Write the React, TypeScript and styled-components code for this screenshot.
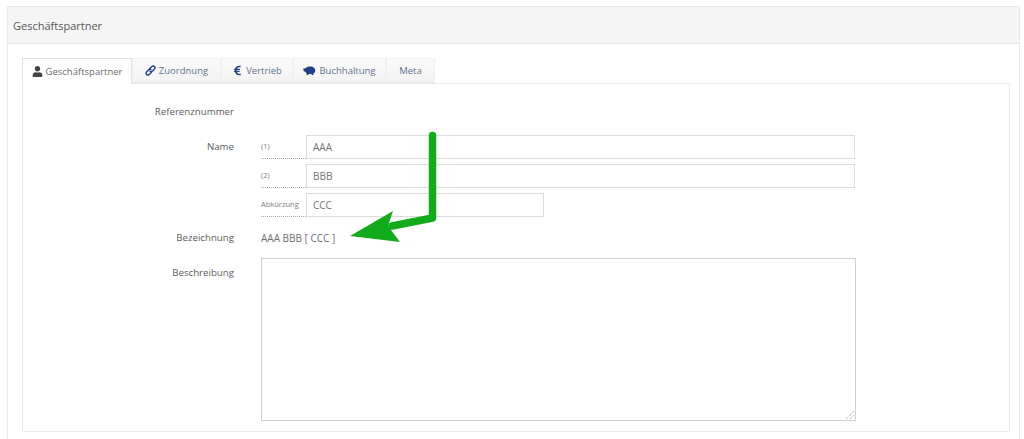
import { createGlobalStyle, styled } from "styled-components";
import { FaUser, FaEuroSign } from "react-icons/fa";

const GlobalStyle = createGlobalStyle`
  html, body {
    margin: 0;
    background: #fff;
    font-family: "Open Sans", "Noto Sans", sans-serif;
    font-size: 10px;
    color: #555;
    overflow: hidden;
  }
`;

const Page = styled.div`
  position: relative;
  width: 1024px;
  height: 439px;
  padding: 6px 4px 0 7px;
  box-sizing: border-box;
  overflow: hidden;
`;

const Panel = styled.section`
  border: 1px solid #e9e9e9;
  border-bottom: none;
  height: 433px;
  box-sizing: border-box;
`;

const PanelHeader = styled.header`
  height: 37px;
  padding-left: 5px;
  display: flex;
  align-items: center;
  background: #f5f5f5;
  border-bottom: 1px solid #e4e4e4;
  box-sizing: border-box;
  font-size: 11px;
  color: #555;
`;

const PanelBody = styled.div`
  padding: 14px 9px 0 14px;
`;

const TabBar = styled.ul`
  display: flex;
  list-style: none;
  margin: 0;
  padding: 0;
  height: 25px;
`;

const Tab = styled.li<{ $active?: boolean; $width: number }>`
  width: ${(p) => p.$width}px;
  height: ${(p) => (p.$active ? 26 : 25)}px;
  box-sizing: border-box;
  display: flex;
  align-items: center;
  justify-content: center;
  gap: 3px;
  position: relative;
  z-index: ${(p) => (p.$active ? 1 : 0)};
  font-size: 9.5px;
  color: ${(p) => (p.$active ? "#6a6a6a" : "#65738f")};
  background: ${(p) => (p.$active ? "#fff" : "linear-gradient(#fbfbfb, #f3f3f3)")};
  border: 1px solid ${(p) => (p.$active ? "#e4e4e4" : "#f1f1f1")};
  border-bottom: ${(p) => (p.$active ? "none" : "1px solid #e8e8e8")};
  svg {
    color: ${(p) => (p.$active ? "#444" : "#1f3f86")};
    width: 11px;
    height: 11px;
    flex: none;
  }
  svg.pig {
    width: 13px;
  }
`;

const TabContent = styled.div`
  border: 1px solid #ebebeb;
  height: 349px;
  box-sizing: border-box;
  padding-top: 21px;
  padding-right: 154px;
`;

const Row = styled.div<{ $mt?: number }>`
  display: grid;
  grid-template-columns: 211px 1fr;
  column-gap: 27px;
  margin-top: ${(p) => p.$mt ?? 0}px;
`;

const Label = styled.label<{ $pt?: number }>`
  text-align: right;
  font-size: 9.7px;
  line-height: 14px;
  padding-top: ${(p) => p.$pt ?? 0}px;
  color: #5c5c5c;
`;

const Plain = styled.div`
  font-size: 10px;
  line-height: 14px;
  color: #6e6e6e;
`;

const Stack = styled.div`
  display: flex;
  flex-direction: column;
  gap: 5px;
`;

const Group = styled.div`
  display: flex;
  height: 24px;
`;

const Addon = styled.span`
  width: 45px;
  flex: none;
  box-sizing: border-box;
  border-bottom: 1px dotted #aaa;
  font-size: 7.5px;
  line-height: 22px;
  color: #808080;
  white-space: nowrap;
`;

const Field = styled.div<{ $width?: number }>`
  flex: ${(p) => (p.$width ? "none" : 1)};
  width: ${(p) => (p.$width ? `${p.$width}px` : "auto")};
  box-sizing: border-box;
  border: 1px solid #dcdcdc;
  padding-left: 6px;
  display: flex;
  align-items: center;
  font-size: 10px;
  color: #747474;
`;

const TextArea = styled.div`
  position: relative;
  height: 163px;
  margin-right: -1px;
  border: 1px solid #d0d0d0;
  box-sizing: border-box;
`;

const Grip = styled.svg`
  position: absolute;
  right: 0;
  bottom: 0;
`;

const Arrow = styled.svg`
  position: absolute;
  left: 0;
  top: 0;
  pointer-events: none;
`;

const ChainIcon = () => (
  <svg viewBox="0 0 12 12" fill="none" stroke="currentColor" strokeWidth="1.5" strokeLinecap="round">
    <path d="M5 4.2 L7.6 1.7 A1.9 1.9 0 0 1 10.3 4.4 L8 6.7 A1.9 1.9 0 0 1 5.4 6.9" />
    <path d="M7 7.8 L4.4 10.3 A1.9 1.9 0 0 1 1.7 7.6 L4 5.3 A1.9 1.9 0 0 1 6.6 5.1" />
  </svg>
);

const PigIcon = () => (
  <svg className="pig" viewBox="0 0 13 11" fill="currentColor">
    <path d="M0.3 3.4 L2.6 3.3 C3.4 2.2 5 1.6 7 1.6 C10 1.6 12.3 3.2 12.3 5.4 C12.3 6.7 11.5 7.7 10.6 8.3 L10.4 10 L8.8 10 L8.5 9 L5.6 9 L5.3 10 L3.7 10 L3.4 8 C2.8 7.6 2.4 7.2 2.1 6.6 L0.8 6.4 Z" />
  </svg>
);

export default function App() {
  return (
    <Page>
      <GlobalStyle />
      <Panel>
        <PanelHeader>Geschäftspartner</PanelHeader>
        <PanelBody>
          <TabBar>
            <Tab $active $width={110}>
              <FaUser /> Geschäftspartner
            </Tab>
            <Tab $width={89}>
              <ChainIcon /> Zuordnung
            </Tab>
            <Tab $width={72}>
              <FaEuroSign /> Vertrieb
            </Tab>
            <Tab $width={93}>
              <PigIcon /> Buchhaltung
            </Tab>
            <Tab $width={49}>Meta</Tab>
          </TabBar>
          <TabContent>
            <Row>
              <Label>Referenznummer</Label>
              <div />
            </Row>
            <Row $mt={16}>
              <Label $pt={5}>Name</Label>
              <Stack>
                <Group>
                  <Addon>(1)</Addon>
                  <Field>AAA</Field>
                </Group>
                <Group>
                  <Addon>(2)</Addon>
                  <Field>BBB</Field>
                </Group>
                <Group>
                  <Addon>Abkürzung</Addon>
                  <Field $width={238}>CCC</Field>
                </Group>
              </Stack>
            </Row>
            <Row $mt={14}>
              <Label>Bezeichnung</Label>
              <Plain>AAA BBB [ CCC ]</Plain>
            </Row>
            <Row $mt={13}>
              <Label $pt={8}>Beschreibung</Label>
              <TextArea>
                <Grip width="10" height="10" viewBox="0 0 10 10">
                  <path d="M1 9 L9 1 M5 9 L9 5" stroke="#999" strokeWidth="1" strokeDasharray="1 1" fill="none" />
                </Grip>
              </TextArea>
            </Row>
          </TabContent>
        </PanelBody>
      </Panel>
      <Arrow width="1024" height="439" viewBox="0 0 1024 439">
        <path d="M432.5 135.5 V218 L392 226" stroke="#12ab1c" strokeWidth="7.5" strokeLinecap="round" strokeLinejoin="round" fill="none" />
        <path d="M350 236 L393 211 L388 226 L400 242 Z" fill="#12ab1c" />
      </Arrow>
    </Page>
  );
}
